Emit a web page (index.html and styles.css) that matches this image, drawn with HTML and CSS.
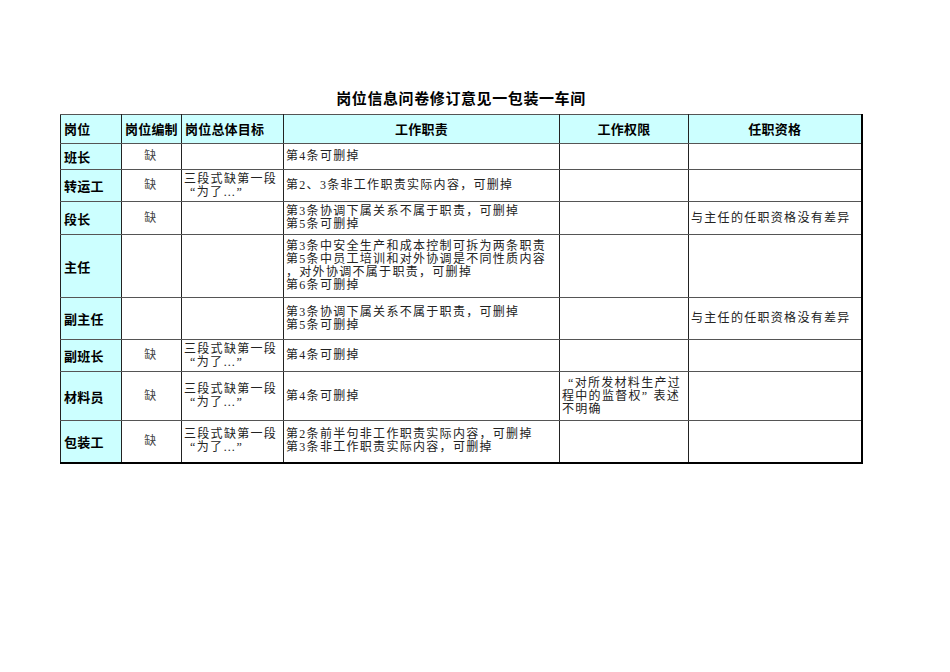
FILE: index.html
```html
<!DOCTYPE html>
<html lang="zh">
<head>
<meta charset="utf-8">
<title>岗位信息问卷修订意见一包装一车间</title>
<link rel="stylesheet" href="styles.css">
</head>
<body>
<div class="page">
  <h1 class="title">岗位信息问卷修订意见一包装一车间</h1>
  <table class="sheet">
    <colgroup>
      <col class="c1"><col class="c2"><col class="c3"><col class="c4"><col class="c5"><col class="c6">
    </colgroup>
    <tr class="r-head">
      <th class="left">岗位</th>
      <th class="left">岗位编制</th>
      <th class="left">岗位总体目标</th>
      <th>工作职责</th>
      <th>工作权限</th>
      <th>任职资格</th>
    </tr>
    <tr class="r1">
      <td class="name">班长</td>
      <td class="mid">缺</td>
      <td></td>
      <td>第4条可删掉</td>
      <td></td>
      <td></td>
    </tr>
    <tr class="r2">
      <td class="name">转运工</td>
      <td class="mid">缺</td>
      <td>三段式缺第一段<br><span class="lq">“为了…”</span></td>
      <td>第2、3条非工作职责实际内容，可删掉</td>
      <td></td>
      <td></td>
    </tr>
    <tr class="r3">
      <td class="name">段长</td>
      <td class="mid">缺</td>
      <td></td>
      <td>第3条协调下属关系不属于职责，可删掉<br>第5条可删掉</td>
      <td></td>
      <td>与主任的任职资格没有差异</td>
    </tr>
    <tr class="r4">
      <td class="name">主任</td>
      <td></td>
      <td></td>
      <td>第3条中安全生产和成本控制可拆为两条职责<br>第5条中员工培训和对外协调是不同性质内容<br>，对外协调不属于职责，可删掉<br>第6条可删掉</td>
      <td></td>
      <td></td>
    </tr>
    <tr class="r5">
      <td class="name">副主任</td>
      <td></td>
      <td></td>
      <td>第3条协调下属关系不属于职责，可删掉<br>第5条可删掉</td>
      <td></td>
      <td>与主任的任职资格没有差异</td>
    </tr>
    <tr class="r6">
      <td class="name">副班长</td>
      <td class="mid">缺</td>
      <td>三段式缺第一段<br><span class="lq">“为了…”</span></td>
      <td>第4条可删掉</td>
      <td></td>
      <td></td>
    </tr>
    <tr class="r7">
      <td class="name">材料员</td>
      <td class="mid">缺</td>
      <td>三段式缺第一段<br><span class="lq">“为了…”</span></td>
      <td>第4条可删掉</td>
      <td><span class="lq">“对所发材料生产过</span><br>程中的监督权<span class="rq">”</span>表述<br>不明确</td>
      <td></td>
    </tr>
    <tr class="r8">
      <td class="name">包装工</td>
      <td class="mid">缺</td>
      <td>三段式缺第一段<br><span class="lq">“为了…”</span></td>
      <td>第2条前半句非工作职责实际内容，可删掉<br>第3条非工作职责实际内容，可删掉</td>
      <td></td>
      <td></td>
    </tr>
  </table>
</div>
</body>
</html>
```
FILE: styles.css
```css
html, body {
  margin: 0;
  padding: 0;
  background: #ffffff;
}

.page {
  padding: 87px 0 0 60px;
  width: 802px;
}

.title {
  margin: 0 0 6px 0;
  height: 21px;
  line-height: 21px;
  text-align: center;
  font-family: "Noto Sans CJK SC", "Liberation Sans", sans-serif;
  font-size: 15px;
  font-weight: bold;
  letter-spacing: 0.6px;
  color: #000;
}

.sheet {
  width: 802px;
  border-collapse: collapse;
  table-layout: fixed;
  border: 1px solid #000;
  border-right-width: 2px;
  border-bottom-width: 2px;
}

.c1 { width: 61px; }
.c2 { width: 60px; }
.c3 { width: 102px; }
.c4 { width: 276px; }
.c5 { width: 129px; }
.c6 { width: 173px; }

.sheet th,
.sheet td {
  border: 1px solid #222;
  border-top-color: #555;
  border-bottom-color: #555;
  padding: 0 3px;
  vertical-align: middle;
  overflow: hidden;
  white-space: nowrap;
}

.sheet th {
  background: #ccffff;
  font-family: "Noto Sans CJK SC", "Liberation Sans", sans-serif;
  font-size: 13px;
  font-weight: bold;
  color: #000;
  text-align: center;
  line-height: 14px;
  letter-spacing: 0.2px;
}

.sheet th.left {
  text-align: left;
}

.sheet td {
  font-family: "Liberation Serif", "Noto Sans CJK SC", serif;
  font-size: 12px;
  line-height: 13px;
  letter-spacing: 1.3px;
  color: #222;
  text-align: left;
  padding-left: 2px;
}

.sheet td .lq {
  padding-left: 6px;
}

.sheet td .rq {
  padding-right: 5px;
}

.sheet td.name {
  background: #ccffff;
  font-family: "Noto Sans CJK SC", "Liberation Sans", sans-serif;
  font-size: 13px;
  font-weight: bold;
  letter-spacing: 0.2px;
  color: #000;
  padding-left: 3px;
}

.sheet td.mid {
  text-align: center;
  color: #444;
}

.r-head { height: 29px; }
.r1 { height: 26px; }
.r2 { height: 32px; }
.r3 { height: 33px; }
.r4 { height: 63px; }
.r5 { height: 42px; }
.r6 { height: 32px; }
.r7 { height: 49px; }
.r8 { height: 42px; }
```
